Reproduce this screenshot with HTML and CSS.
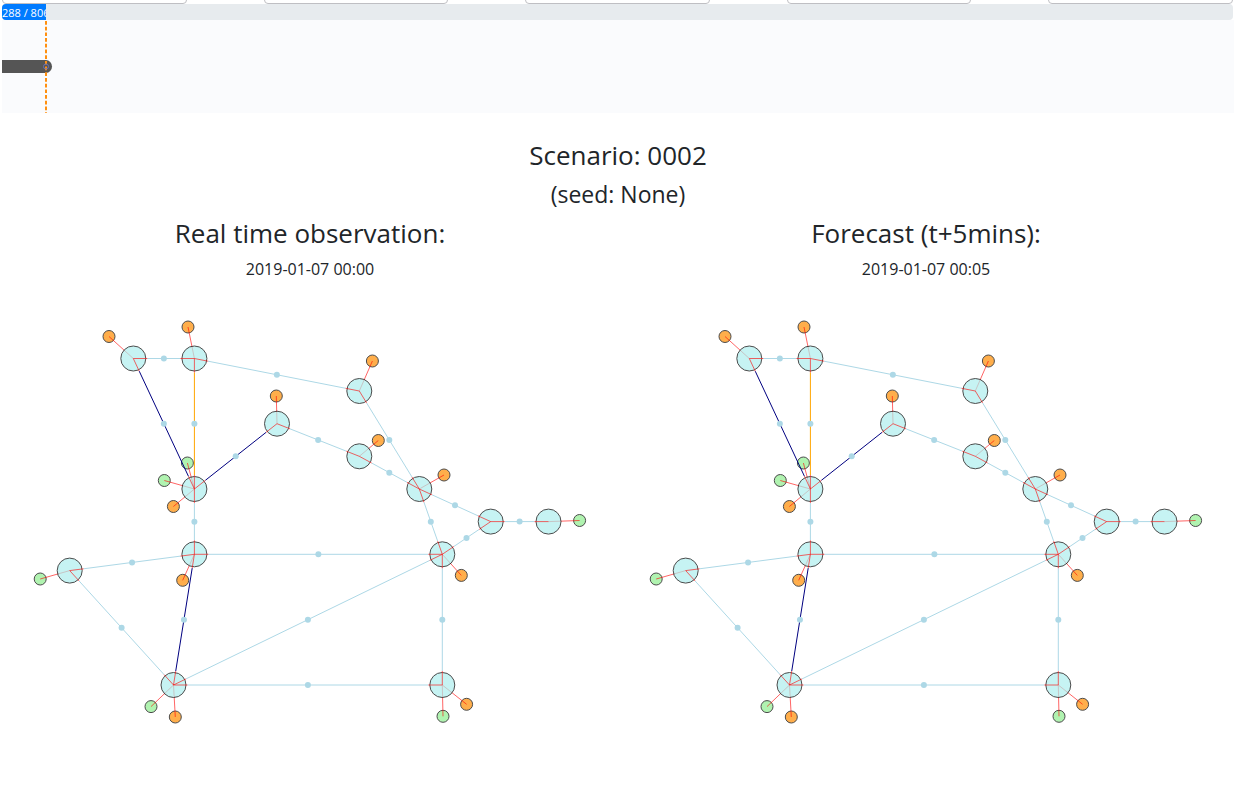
FILE: index.html
```
<!DOCTYPE html>
<html lang="en">
<head>
<meta charset="utf-8">
<title>Scenario: 0002</title>
<link rel="stylesheet" href="styles.css">
</head>
<body>
<div class="controls">
  <div class="control"></div>
  <div class="control"></div>
  <div class="control"></div>
  <div class="control"></div>
  <div class="control"></div>
</div>
<div class="progress">
  <div class="progress-bar">288 / 806</div>
</div>
<svg class="timeline" aria-hidden="true">
  <path d="M0 46.500H44" stroke="#555" stroke-width="13"/>
  <path d="M44 40A6 6.500 0 0 1 44 53Z" fill="#555"/>
  <path d="M44 1V93" stroke="#ff9010" stroke-width="2" stroke-dasharray="3.700 2"/>
  <circle cx="44" cy="46.500" r="2.500" fill="none" stroke="#6a6fb5"/>
</svg>
<main>
  <header class="scenario">
    <h1 class="title">Scenario: 0002</h1>
    <h2 class="seed">(seed: None)</h2>
  </header>
  <div class="views">
    <section class="view">
      <h2 class="title">Real time observation:</h2>
      <p class="stamp">2019-01-07 00:00</p>
      <svg class="grid" viewBox="2 285 616 490"></svg>
    </section>
    <section class="view">
      <h2 class="title">Forecast (t+5mins):</h2>
      <p class="stamp">2019-01-07 00:05</p>
      <svg class="grid" viewBox="2 285 616 490"></svg>
    </section>
  </div>
</main>
<script src="grid.js"></script>
</body>
</html>
```
FILE: styles.css
```
* { box-sizing: border-box; }
body {
  margin: 0;
  padding-left: 2px;
  background: #fff;
  color: #212529;
  font-family: "Segoe UI", "Open Sans", "Noto Sans", sans-serif;
}
.controls {
  display: flex;
  justify-content: space-between;
  height: 4px;
  padding-right: 1px;
  overflow: hidden;
  align-items: flex-end;
}
.control {
  flex: 0 0 15%;
  height: 36px;
  border: 1px solid #bfbfc3;
  border-radius: 4px;
}
.progress {
  height: 16px;
  margin-right: 1px;
  border-radius: 4px;
  background: #e7ebee;
  overflow: hidden;
}
.progress-bar {
  width: 44px;
  height: 16px;
  overflow: hidden;
  white-space: nowrap;
  background: #007bff;
  color: #fff;
  font-size: 11px;
  line-height: 18px;
}
.timeline {
  display: block;
  width: 100%;
  height: 93px;
  background: #fafbfd;
}
.scenario { padding-top: 25px; text-align: center; }
.title {
  margin: 0;
  font-size: 26px;
  font-weight: 400;
  line-height: 34px;
}
.seed {
  margin: 8px 0;
  font-size: 23px;
  font-weight: 400;
  line-height: 28px;
}
.views { display: grid; grid-template-columns: 1fr 1fr; }
.view { text-align: center; }
.stamp {
  margin: 8px 0 5px;
  font-size: 16px;
  line-height: 22px;
}
.grid { display: block; width: 100%; }
.generator, .load, .substation { stroke: #000; opacity: .7; }
.generator { fill: lightgreen; }
.load { fill: darkorange; }
.substation { fill: paleturquoise; }
.link { stroke: red; opacity: .6; }
.line { stroke: lightblue; }
.line-low { stroke: navy; }
.line-high { stroke: orange; }
.middle { fill: lightblue; }
```
FILE: grid.js
```
const substations = {
  A: [133.3, 358.5], B: [194.4, 358.5], C: [359.3, 391], D: [277, 423.7],
  E: [359.3, 456.3], F: [194.4, 489], G: [419.3, 489], H: [490.7, 521.6],
  I: [548.5, 521.6], J: [194.4, 554.3], K: [442.3, 554.3], L: [69.7, 570.6],
  M: [173.5, 685], N: [442.3, 685]
};
const lines = [
  ["A", "B"], ["A", "F", "line-low"], ["B", "F", "line-high"], ["B", "C"],
  ["C", "G"], ["D", "F", "line-low"], ["D", "E"], ["E", "G"], ["G", "H"],
  ["G", "K"], ["H", "I"], ["H", "K"], ["F", "J"], ["J", "K"], ["J", "L"],
  ["J", "M", "line-low"], ["L", "M"], ["M", "K"], ["M", "N"], ["K", "N"]
];
const units = [
  ["generator", 187.4, 463, "F"], ["generator", 164.3, 480.5, "F"],
  ["generator", 40.2, 579, "L"], ["generator", 151, 706.6, "M"],
  ["generator", 443, 716.3, "N"], ["generator", 579.6, 520.5, "I"],
  ["load", 109, 336.5, "A"], ["load", 188, 327, "B"],
  ["load", 372.4, 361, "C"], ["load", 276.3, 396, "D"],
  ["load", 378.3, 440.5, "E"], ["load", 173.4, 506.5, "F"],
  ["load", 444, 475, "G"], ["load", 182.7, 580.3, "J"],
  ["load", 461.3, 575.4, "K"], ["load", 175.3, 717, "M"],
  ["load", 466.6, 704.3, "N"]
];
const STUB = 14;

function segment(cls, x1, y1, x2, y2) {
  return `<line class="${cls}" x1="${x1}" y1="${y1}" x2="${x2}" y2="${y2}"/>`;
}
function disc(cls, x, y, r) {
  return `<circle class="${cls}" cx="${x}" cy="${y}" r="${r}"/>`;
}

let drawing = "";
for (const [kind, x, y, at] of units) {
  drawing += disc(kind, x, y, 6) + segment("link", x, y, ...substations[at]);
}
for (const [x, y] of Object.values(substations)) {
  drawing += disc("substation", x, y, 12.5);
}
for (const [from, to, level = ""] of lines) {
  const [x1, y1] = substations[from];
  const [x2, y2] = substations[to];
  const length = Math.hypot(x2 - x1, y2 - y1);
  const dx = (x2 - x1) / length * STUB;
  const dy = (y2 - y1) / length * STUB;
  drawing += segment(`line ${level}`, x1 + dx, y1 + dy, x2 - dx, y2 - dy);
  drawing += segment("link", x1, y1, x1 + dx, y1 + dy);
  drawing += segment("link", x2, y2, x2 - dx, y2 - dy);
  drawing += disc("middle", (x1 + x2) / 2, (y1 + y2) / 2, 3);
}
document.querySelectorAll(".grid").forEach(svg => { svg.innerHTML = drawing; });
```
